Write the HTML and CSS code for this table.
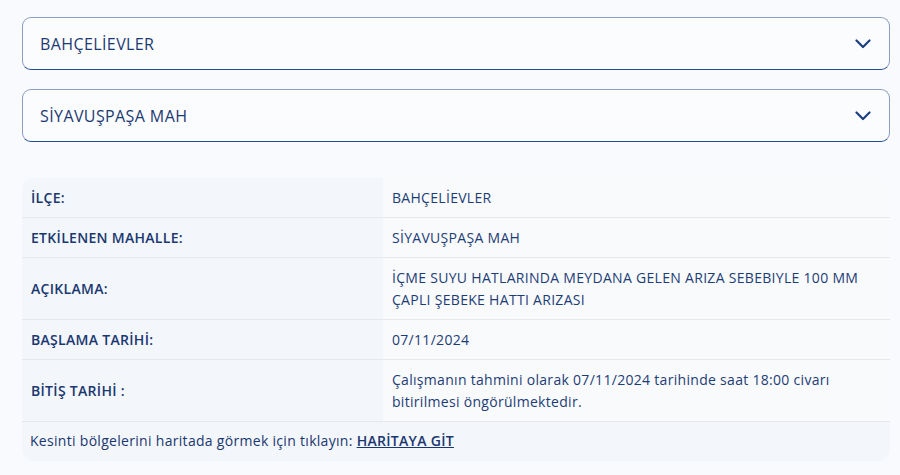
FILE: index.html
```html
<!DOCTYPE html>
<html lang="tr">
<head>
<meta charset="utf-8">
<link rel="stylesheet" href="styles.css">
</head>
<body>
<div class="page">
  <div class="select">
    <span class="select-text">BAHÇELİEVLER</span>
    <svg class="chev" width="16" height="10" viewBox="0 0 16 10"><path d="M1.5 1.5 L8 8 L14.5 1.5" fill="none" stroke="#1b3f7c" stroke-width="2.2" stroke-linecap="round" stroke-linejoin="round"/></svg>
  </div>
  <div class="select">
    <span class="select-text">SİYAVUŞPAŞA MAH</span>
    <svg class="chev" width="16" height="10" viewBox="0 0 16 10"><path d="M1.5 1.5 L8 8 L14.5 1.5" fill="none" stroke="#1b3f7c" stroke-width="2.2" stroke-linecap="round" stroke-linejoin="round"/></svg>
  </div>

  <div class="info">
    <div class="row">
      <div class="label">İLÇE:</div>
      <div class="value">BAHÇELİEVLER</div>
    </div>
    <div class="row">
      <div class="label">ETKİLENEN MAHALLE:</div>
      <div class="value">SİYAVUŞPAŞA MAH</div>
    </div>
    <div class="row">
      <div class="label">AÇIKLAMA:</div>
      <div class="value">İÇME SUYU HATLARINDA MEYDANA GELEN ARIZA SEBEBIYLE 100 MM ÇAPLI ŞEBEKE HATTI ARIZASI</div>
    </div>
    <div class="row">
      <div class="label">BAŞLAMA TARİHİ:</div>
      <div class="value">07/11/2024</div>
    </div>
    <div class="row">
      <div class="label">BİTİŞ TARİHİ :</div>
      <div class="value plain">Çalışmanın tahmini olarak 07/11/2024 tarihinde saat 18:00 civarı bitirilmesi öngörülmektedir.</div>
    </div>
    <div class="foot">Kesinti bölgelerini haritada görmek için tıklayın: <a class="maplink" href="#">HARİTAYA GİT</a></div>
  </div>
</div>
</body>
</html>
```

FILE: styles.css
```css
* { box-sizing: border-box; }
html, body { margin: 0; padding: 0; }
body {
  background: #f9fafd;
  font-family: "Open Sans", "Noto Sans", sans-serif;
  color: #1a386f;
}
.page {
  padding: 17px 10px 0 22px;
  display: flex;
  flex-direction: column;
  gap: 19px;
}
.select {
  height: 53px;
  border: 1px solid #8c9ec2;
  border-bottom-color: #1e4f98;
  border-radius: 9px;
  display: flex;
  align-items: center;
  justify-content: space-between;
  padding: 0 18px 0 17px;
  background: #fbfcfe;
}
.select-text {
  font-size: 16px;
  font-weight: 500;
  color: #1b3a72;
  letter-spacing: 0.4px;
}
.chev { display: block; margin-top: 1px; }
.info {
  margin-top: 17px;
  border-radius: 12px;
  overflow: hidden;
  background: #f9fafc;
  letter-spacing: 0.3px;
}
.row {
  display: grid;
  grid-template-columns: 361px 1fr;
  border-bottom: 1px solid #e6e8ec;
}
.label {
  background: #f3f6fb;
  padding: 9px 9px 8px 9px;
  font-size: 14px;
  font-weight: 600;
  line-height: 22px;
  display: flex;
  align-items: center;
  color: #1a386f;
}
.value {
  padding: 9px 10px 8px 9px;
  font-size: 14px;
  line-height: 22px;
  font-weight: 500;
  color: #1d3d76;
}
.foot {
  background: #f3f6fb;
  padding: 8px 8px 9px 8px;
  font-size: 14px;
  line-height: 22px;
  color: #1a386f;
}
.maplink {
  color: #1a386f;
  font-weight: 600;
  text-decoration: underline;
}
```
